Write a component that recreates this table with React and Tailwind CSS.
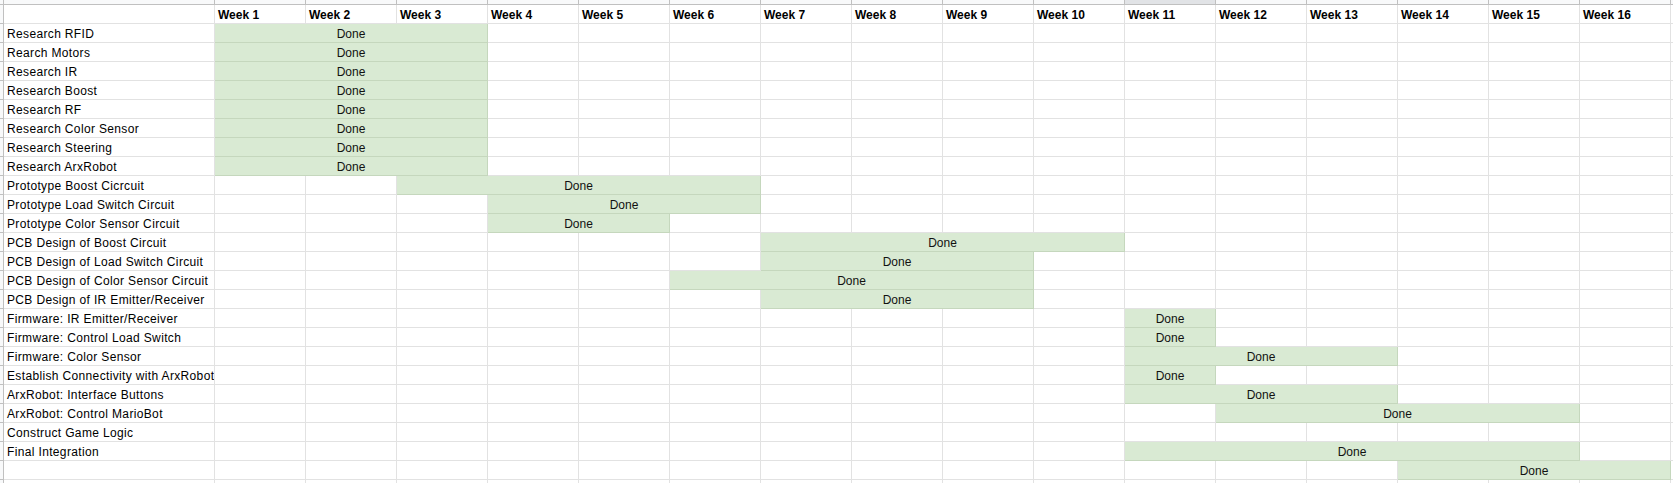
import React from 'react'

const weeks = Array.from({ length: 16 }, (_, i) => `Week ${i + 1}`)

// [task name, first week, last week] — 0 means no bar
const tasks = [
  ['Research RFID', 1, 3],
  ['Rearch Motors', 1, 3],
  ['Research IR', 1, 3],
  ['Research Boost', 1, 3],
  ['Research RF', 1, 3],
  ['Research Color Sensor', 1, 3],
  ['Research Steering', 1, 3],
  ['Research ArxRobot', 1, 3],
  ['Prototype Boost Cicrcuit', 3, 6],
  ['Prototype Load Switch Circuit', 4, 6],
  ['Prototype Color Sensor Circuit', 4, 5],
  ['PCB Design of Boost Circuit', 7, 10],
  ['PCB Design of Load Switch Circuit', 7, 9],
  ['PCB Design of Color Sensor Circuit', 6, 9],
  ['PCB Design of IR Emitter/Receiver', 7, 9],
  ['Firmware: IR Emitter/Receiver', 11, 11],
  ['Firmware: Control Load Switch', 11, 11],
  ['Firmware: Color Sensor', 11, 13],
  ['Establish Connectivity with ArxRobot', 11, 11],
  ['ArxRobot: Interface Buttons', 11, 13],
  ['ArxRobot: Control MarioBot', 12, 15],
  ['Construct Game Logic', 0, 0],
  ['Final Integration', 11, 15],
  ['', 14, 16],
  ['', 0, 0],
]

const font = { fontFamily: '"Liberation Sans", Arial, sans-serif' }

function RowStub() {
  return <div className="w-[4px] h-[19px] shrink-0 bg-[#f8f9fa] border-r border-b border-[#c0c0c0]" />
}

function WeekCells({ from, to }) {
  const cells = []
  for (let w = 1; w <= 16; w++) {
    if (from && w === from) {
      const span = to - from + 1
      cells.push(
        <div
          key={w}
          className="h-[19px] shrink-0 bg-[#d9ead3] border-r border-b border-[#c5d7bd] text-center pt-[3px] leading-[14px] text-[#111]"
          style={{ width: span * 91 }}
        >
          Done
        </div>
      )
      w = to
    } else {
      cells.push(<div key={w} className="w-[91px] h-[19px] shrink-0 border-r border-b border-[#e2e2e2]" />)
    }
  }
  return cells
}

export default function App() {
  return (
    <div className="w-[1673px] h-[483px] overflow-hidden bg-white text-[12px] text-black" style={font}>
      {/* column letters strip, cut off */}
      <div className="flex h-[5px]">
        <div className="w-[4px] shrink-0 bg-[#f8f9fa] border-r border-b border-[#c0c0c0]" />
        <div className="w-[211px] shrink-0 bg-[#f8f9fa] border-r border-b border-[#c0c0c0]" />
        {weeks.map((w, i) => (
          <div
            key={w}
            className={
              i === 10
                ? 'w-[91px] shrink-0 bg-[#e1e3e6] border-r border-b border-[#c0c0c0]'
                : 'w-[91px] shrink-0 bg-[#f8f9fa] border-r border-b border-[#c0c0c0]'
            }
          />
        ))}
        <div className="flex-1 bg-[#f8f9fa] border-b border-[#c0c0c0]" />
      </div>

      {/* header */}
      <div className="flex">
        <RowStub />
        <div className="w-[211px] h-[19px] shrink-0 border-r border-b border-[#e2e2e2]" />
        {weeks.map((w) => (
          <div key={w} className="w-[91px] h-[19px] shrink-0 border-r border-b border-[#e2e2e2] pl-[3px] pt-[3px] leading-[14px] font-bold whitespace-nowrap">
            {w}
          </div>
        ))}
        <div className="flex-1 h-[19px] border-b border-[#e2e2e2]" />
      </div>

      {tasks.map(([name, from, to], i) => (
        <div key={i} className="flex">
          <RowStub />
          <div className="w-[211px] h-[19px] shrink-0 border-r border-b border-[#e2e2e2] pl-[3px] pt-[3px] leading-[14px] tracking-[0.35px] whitespace-nowrap overflow-hidden">
            {name}
          </div>
          <WeekCells from={from} to={to} />
          <div className="flex-1 h-[19px] border-b border-[#e2e2e2]" />
        </div>
      ))}
    </div>
  )
}
